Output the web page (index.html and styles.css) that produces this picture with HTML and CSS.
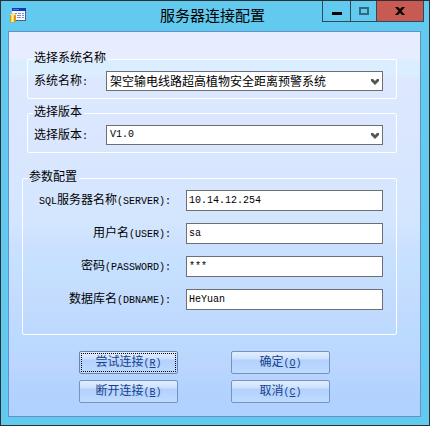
FILE: index.html
```
<!DOCTYPE html>
<html lang="zh-CN">
<head>
    <meta charset="UTF-8">
    <meta name="viewport" content="width=device-width, initial-scale=1.0">
    <link rel="stylesheet" href="styles.css">
    <title>服务器连接配置</title>
</head>
<body>
    <div class="window">
        <header class="titlebar">
            <svg class="appicon" width="17" height="16" viewBox="0 0 17 16">
                <rect x="2" y="0" width="14" height="13" fill="#4a5f98"/>
                <rect x="2" y="0" width="13" height="12" fill="#f4f8ff"/>
                <rect x="2" y="0" width="14" height="3" fill="#1438b8"/>
                <rect x="3" y="1" width="6" height="1" fill="#4a78e8"/>
                <path d="M5 5.500h2m1 0h3m1 0h2M7 7.500h4m1 0h2M7 9.500h4m1 0h2" stroke="#7c90c4" fill="none"/>
                <path d="M0 6.500q3-2 6 0v7q-3 2-6 0z" fill="#d8971c"/>
                <rect x="1" y="7" width="3" height="7" fill="#fbd65c"/>
                <rect x="2" y="7" width="1" height="7" fill="#fff3b0"/>
                <ellipse cx="3" cy="6.500" rx="3" ry="1" fill="#ffe48a"/>
            </svg>
            <h1>服务器连接配置</h1>
            <div class="winbuttons">
                <button class="min" aria-label="最小化"><svg width="10" height="3"><rect width="10" height="3" fill="#000"/></svg></button>
                <button class="max" aria-label="最大化" disabled><svg width="10" height="8"><rect x="1" y="1" width="8" height="6" fill="none" stroke="#2f6a7c" stroke-width="2"/></svg></button>
                <button class="close" aria-label="关闭"><svg width="10" height="8"><path d="M0 0h3l2 2 2-2h3L6.500 4 10 8H7L5 6 3 8H0l3.500-4z" fill="#000"/></svg></button>
            </div>
        </header>

        <form class="client">
            <fieldset class="group">
                <legend>选择系统名称</legend>
                <div class="row">
                    <label for="system">系统名称<span class="en">:</span></label>
                    <div class="combo">
                        <select id="system"><option>架空输电线路超高植物安全距离预警系统</option></select>
                        <svg class="arrow" width="8" height="6"><path d="M0 0h2l2 2 2-2h2v2L4 6 0 2z" fill="#555"/></svg>
                    </div>
                </div>
            </fieldset>

            <fieldset class="group">
                <legend>选择版本</legend>
                <div class="row">
                    <label for="version">选择版本<span class="en">:</span></label>
                    <div class="combo">
                        <select id="version" class="en"><option>V1.0</option></select>
                        <svg class="arrow" width="8" height="6"><path d="M0 0h2l2 2 2-2h2v2L4 6 0 2z" fill="#555"/></svg>
                    </div>
                </div>
            </fieldset>

            <fieldset class="group params">
                <legend>参数配置</legend>
                <div class="fields">
                    <label for="server"><span class="en">SQL</span>服务器名称<span class="en">(SERVER):</span></label>
                    <input id="server" class="en" type="text" value="10.14.12.254">
                    <label for="user">用户名<span class="en">(USER):</span></label>
                    <input id="user" class="en" type="text" value="sa">
                    <label for="password">密码<span class="en">(PASSWORD):</span></label>
                    <input id="password" class="en" type="text" value="***">
                    <label for="dbname">数据库名<span class="en">(DBNAME):</span></label>
                    <input id="dbname" class="en" type="text" value="HeYuan">
                </div>
            </fieldset>

            <div class="actions">
                <button type="button" class="btn default" accesskey="r">尝试连接<span class="en">(<u>R</u>)</span></button>
                <button type="button" class="btn" accesskey="o">确定<span class="en">(<u>O</u>)</span></button>
                <button type="button" class="btn" accesskey="b">断开连接<span class="en">(<u>B</u>)</span></button>
                <button type="button" class="btn" accesskey="c">取消<span class="en">(<u>C</u>)</span></button>
            </div>
        </form>
    </div>
</body>
</html>
```

FILE: styles.css
```
*{ box-sizing: border-box; }
body{ margin: 0; background-color: #62caee; color: #000; font: 12px/14px "Noto Sans CJK SC", sans-serif; }
button, input, select{ font: inherit; color: inherit; margin: 0; border-radius: 0; }

.window{ border: 1px solid #2d2f33; padding: 0 8px 8px 7px; background-color: #62caee; }

.titlebar{ display: grid; grid-template-columns: 1fr auto 1fr; height: 30px; margin: 0 -3px 0 -7px; }
.appicon{ margin: 7px 0 0 9px; }
h1{ margin: 3px 0 0; font-size: 15px; line-height: 22px; font-weight: normal; }
.winbuttons{ display: flex; justify-self: end; height: 21px; border: 1px solid #2d4a5a; border-top: 0; }
.winbuttons button{ display: flex; align-items: center; justify-content: center; padding: 0; border: 0; background: none; width: 27px; }
.winbuttons .max{ border-left: 1px solid #2d4a5a; border-right: 1px solid #2d4a5a; }
.winbuttons .close{ width: 46px; background-color: #c75b54; }
.winbuttons .min svg{ margin-top: 4px; }

.client{
    padding: 18px 23px 13px 18px;
    border: 1px solid #6490cc;
    background-image: linear-gradient(#e8edfe, #e6edfe 27px, #daeeff 29px, #daeefe 42px, #dde8fe 46px, #d8e6fe 130px, #d3e6fe 190px, #cbe0fe 215px, #c4e1ff 235px, #c6defe 250px, #c0dafe 285px, #badafe 305px, #bcd6fe 330px, #bdd5fe 335px, #b4d4fe 350px, #b0d0fe);
}

/* group boxes */
.group{ min-width: 0; margin: 0 0 5px; padding: 3px 13px 7px 6px; border: 1px solid #fff; border-radius: 2px; }
.group legend{ margin-left: -1px; padding: 0 2px 4px 1px; }
.params{ margin: 16px 0 16px -5px; padding-bottom: 24px; }
.row{ display: flex; }
.row label{ width: 72px; padding-top: 2px; }

.combo{ position: relative; flex: 1; }
.combo select{ display: block; width: 100%; height: 20px; padding: 0 16px 0 3px; border: 1px solid #6c7076; background-color: #fff; appearance: none; }
.arrow{ position: absolute; top: 8px; right: 4px; }

.fields{ display: grid; grid-template-columns: 142px 1fr; column-gap: 15px; row-gap: 12px; }
.fields label{ text-align: right; padding-top: 2px; }
.fields input{ width: 100%; height: 21px; padding: 0 2px; border: 1px solid #6c7076; background-color: #fff; }
.en, .combo select.en{ font-family: "Liberation Mono", monospace; font-size: 10px; }

.actions{ display: grid; grid-template-columns: 99px 99px; gap: 6px 53px; margin-left: 52px; }
.btn{
    height: 23px;
    padding: 0 0 1px;
    border: 1px solid #7492c4;
    border-radius: 2px;
    color: #15428b;
    background-image: linear-gradient(#e2eeff, #cde0fe 7px, #b4d0fe 8px, #b8d6fe 15px, #c0dcff);
}
.default{ border-color: #6a84b0; outline: 1px dotted #000; outline-offset: -3px; }
```
